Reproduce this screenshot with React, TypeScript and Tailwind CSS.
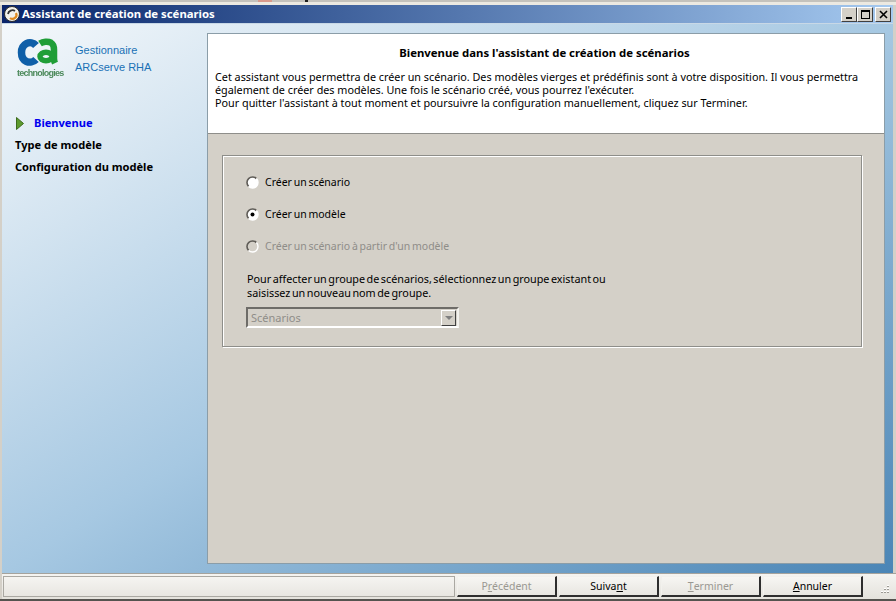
const tahoma = "font-['Noto_Sans','DejaVu_Sans',sans-serif]";

function Radio({ checked, disabled, label }: { checked?: boolean; disabled?: boolean; label: string }) {
  return (
    <div className="flex h-[16px] items-center">
      <svg width="13" height="13" viewBox="0 0 13 13" className="ml-[23px] shrink-0">
        <circle cx="6.5" cy="6.5" r="5.5" fill={disabled ? "#d4d0c8" : "#ffffff"} />
        <path d="M2.6 10.4A5.5 5.5 0 0 1 10.4 2.6" fill="none" stroke="#5f5c57" strokeWidth="1.6" />
        <path d="M10.4 2.6A5.5 5.5 0 0 1 2.6 10.4" fill="none" stroke="#ffffff" strokeWidth="1.4" />
        {checked && <circle cx="6.5" cy="6.5" r="2" fill="#000000" />}
      </svg>
      <span className={`ml-[6px] mt-[1px] text-[10.5px] [word-spacing:-1px] ${disabled ? "text-[#8f8d88]" : "text-black"}`}>{label}</span>
    </div>
  );
}

function WinButton({ children }: { children: React.ReactNode }) {
  return (
    <div className="flex h-[15px] w-[16px] items-center justify-center border border-t-white border-l-white border-r-[#404040] border-b-[#404040] bg-[#d4d0c8]">
      {children}
    </div>
  );
}

function FooterButton({ label, disabled, u }: { label: string; disabled?: boolean; u: number }) {
  return (
    <div
      className={`flex h-[21px] w-[100px] items-center justify-center border border-t-[#f2f1ed] border-l-[#f2f1ed] border-r-2 border-b-2 border-r-[#2e2e2e] border-b-[#2e2e2e] bg-gradient-to-b from-[#f7f6f3] to-[#e8e6e1] pt-[1px] text-[10.5px] ${
        disabled ? "text-[#9a9892]" : "text-black"
      }`}
    >
      {label.slice(0, u)}
      <span className="underline">{label[u]}</span>
      {label.slice(u + 1)}
    </div>
  );
}

function Logo() {
  return (
    <div className="relative h-[40px] w-[50px]">
      <svg width="50" height="32" viewBox="0 0 50 32" className="absolute left-[1px] top-0 blur-[0.4px]">
        <path d="M20 8.500C17.500 5.500 13.500 5 10.500 6.500 6.500 8.500 5.500 12 5.500 15.500c0 4 1.500 7.500 5 9 3 1.200 7 .6 9.500-2" fill="none" stroke="#0f5fa8" strokeWidth="7.500" />
        <path d="M24 6.500c3-2 8-2.500 11-.8 2.500 1.500 3 3.500 3 7v8.500c0 2 .3 3.500 1 5" fill="none" stroke="#1f9e37" strokeWidth="6.500" />
        <ellipse cx="30" cy="19.500" rx="6" ry="4.300" fill="none" stroke="#1f9e37" strokeWidth="5.500" />
      </svg>
      <span className="absolute left-[2px] top-[30px] font-['Liberation_Sans',sans-serif] text-[9px] font-bold tracking-[-0.75px] text-[#4d8a5c] blur-[0.5px]">
        technologies
      </span>
    </div>
  );
}

export default function App() {
  return (
    <div className={`flex h-[601px] w-[896px] flex-col overflow-hidden bg-[#d4d0c8] ${tahoma}`}>
      {/* --- TOP STRIP --- */}
      <div className="flex h-[2px] bg-[#c4c2bc]">
        <div className="ml-[258px] w-[14px] bg-[#d89a8c]" />
        <div className="ml-[33px] w-[3px] bg-[#202020]" />
      </div>
      <div className="h-[3px] bg-[#ece9e1]" />

      {/* --- TITLE BAR --- */}
      <div className="ml-[2px] mr-[3px] flex h-[18px] items-center bg-gradient-to-r from-[#0a246a] to-[#a6caf0] pl-[2px]">
        <svg width="16" height="16" viewBox="0 0 16 16" className="shrink-0">
          <circle cx="8" cy="8" r="7.500" fill="#f3f1ea" stroke="#2a2a2a" />
          <path d="M4 8a4.500 4.500 0 0 1 7-3" fill="none" stroke="#333333" strokeWidth="1.800" />
          <path d="M12 7a4 4 0 0 1-6 5" fill="none" stroke="#e08a1e" strokeWidth="2.200" />
        </svg>
        <span className="ml-[2px] flex-1 text-[11.35px] font-bold text-white">Assistant de création de scénarios</span>
        <div className="flex items-center pr-[2px]">
          <WinButton>
            <div className="mt-[7px] h-[2px] w-[6px] bg-black" />
          </WinButton>
          <WinButton>
            <div className="h-[9px] w-[9px] border border-t-2 border-black" />
          </WinButton>
          <div className="w-[2px]" />
          <WinButton>
            <svg width="9" height="9" viewBox="0 0 9 9">
              <path d="M1 1l7 7M8 1l-7 7" stroke="#000000" strokeWidth="1.600" />
            </svg>
          </WinButton>
        </div>
      </div>

      {/* --- BODY --- */}
      <div className="ml-[2px] mr-[3px] flex h-[550px] border-t border-[#c8d8e6] bg-[linear-gradient(to_bottom_right,#f4f8fb_0%,#a6c8e2_50%,#4a85b6_100%)] pt-[9px]">
        <div className="w-[205px] shrink-0">
          <div className="flex pl-[13px] pt-[4px]">
            <Logo />
            <div className="ml-[10px] pt-[5px] font-['Liberation_Sans',sans-serif] text-[11px] leading-[17px] text-[#1a71b5]">
              <div>Gestionnaire</div>
              <div>ARCserve RHA</div>
            </div>
          </div>
          <div className="mt-[38px] flex flex-col gap-[6px] pl-[13px] text-[11.1px] font-bold leading-[16px]">
            <div className="flex items-center">
              <svg width="8" height="13" viewBox="0 0 8 13" className="ml-[1px] shrink-0">
                <path d="M0.500 0.500L7.500 6.500 0.500 12.500Z" fill="#5d9b2e" stroke="#3d6b1c" />
              </svg>
              <span className="ml-[10px] text-[#0000ee]">Bienvenue</span>
            </div>
            <div className="text-black">Type de modèle</div>
            <div className="text-black">Configuration du modèle</div>
          </div>
        </div>

        {/* --- MAIN PANEL --- */}
        <div className="mb-[9px] mr-[8px] flex flex-1 flex-col border border-[#8b9da8]">
          <div className="h-[100px] border-b border-[#8e8e8a] bg-white px-[7px] pt-[11px] text-[10.8px] leading-[13px] text-black">
            <div className="pr-[3px] text-center text-[11.35px] font-bold leading-[16px]">Bienvenue dans l'assistant de création de scénarios</div>
            <p className="mt-[9px]">
              Cet assistant vous permettra de créer un scénario. Des modèles vierges et prédéfinis sont à votre disposition. Il vous permettra
              <br />
              également de créer des modèles. Une fois le scénario créé, vous pourrez l'exécuter.
              <br />
              Pour quitter l'assistant à tout moment et poursuivre la configuration manuellement, cliquez sur Terminer.
            </p>
          </div>
          <div className="flex-1 bg-[#d4d0c8] pl-[14px] pr-[22px] pt-[21px]">
            <div className="h-[192px] border border-[#8e8e8a] pt-[18px] shadow-[inset_1px_1px_0_#ffffff,1px_1px_0_#ffffff]">
              <div className="flex flex-col gap-[16px]">
                <Radio label="Créer un scénario" />
                <Radio checked label="Créer un modèle" />
                <Radio disabled label="Créer un scénario à partir d'un modèle" />
              </div>
              <p className="ml-[24px] mt-[18px] text-[10.8px] leading-[14px] text-black [word-spacing:-1.3px]">
                Pour affecter un groupe de scénarios, sélectionnez un groupe existant ou
                <br />
                saisissez un nouveau nom de groupe.
              </p>
              <div className="ml-[23px] mt-[7px] flex h-[21px] w-[213px] items-center justify-between border-2 border-t-[#6e6c68] border-l-[#6e6c68] border-r-[#f2f1ed] border-b-white pl-[3px] pr-[1px] text-[11px] text-[#8f8d88]">
                <span className="mt-[1px]">Scénarios</span>
                <div className="flex h-[16px] w-[15px] items-center justify-center border border-t-white border-l-white border-r-[#404040] border-b-[#404040]">
                  <div className="h-0 w-0 border-x-[4px] border-t-[4px] border-x-transparent border-t-[#808080]" />
                </div>
              </div>
            </div>
          </div>
        </div>
      </div>

      {/* --- FOOTER --- */}
      <div className="ml-[2px] flex h-[26px] items-start border-t border-[#a5a39d] bg-gradient-to-b from-[#f5f4f1] to-[#e4e2dc] pl-[1px] pt-[2px]">
        <div className="h-[21px] w-[452px] border border-[#aaa8a2] bg-gradient-to-b from-[#f5f4f1] to-[#e8e6e1]" />
        <div className="ml-[2px] flex gap-[2px]">
          <FooterButton disabled label="Précédent" u={1} />
          <FooterButton label="Suivant" u={5} />
          <FooterButton disabled label="Terminer" u={0} />
          <FooterButton label="Annuler" u={0} />
        </div>
        <svg width="12" height="12" viewBox="0 0 12 12" className="ml-[15px] mt-[8px]">
          <path d="M9 1h2v2H9zM6 4h2v2H6zM9 4h2v2H9zM3 7h2v2H3zM6 7h2v2H6zM9 7h2v2H9z" fill="#ffffff" />
          <path d="M9 2h2v1H9zM6 5h2v1H6zM9 5h2v1H9zM3 8h2v1H3zM6 8h2v1H6zM9 8h2v1H9z" fill="#9c9a94" />
        </svg>
      </div>
      <div className="h-[2px] bg-[#55534f]" />
    </div>
  );
}
